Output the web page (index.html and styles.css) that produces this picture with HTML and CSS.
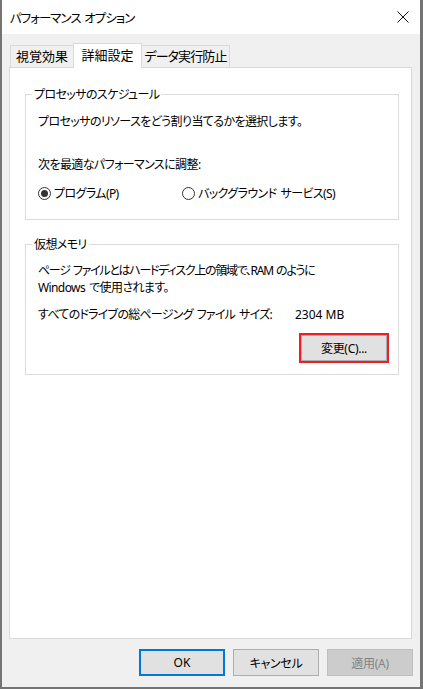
FILE: index.html
```html
<!DOCTYPE html>
<html lang="ja">
<head>
<meta charset="utf-8">
<title>パフォーマンス オプション</title>
<link rel="stylesheet" href="styles.css">
</head>
<body>
<div class="window">
  <div class="titlebar">
    <span class="title">パフォーマンス オプション</span>
    <svg class="close" width="12" height="12" viewBox="0 0 12 12"><path d="M0.5 0.5 L11.5 11.5 M11.5 0.5 L0.5 11.5" stroke="#111" stroke-width="1" fill="none"/></svg>
  </div>
  <div class="content">
    <div class="tabs">
      <div class="tab t1">視覚効果</div>
      <div class="tab t2 active">詳細設定</div>
      <div class="tab t3">データ実行防止</div>
    </div>
    <div class="panel">
      <fieldset class="group g1">
        <legend>プロセッサのスケジュール</legend>
        <p class="line l1">プロセッサのリソースをどう割り当てるかを選択します。</p>
        <p class="line l2">次を最適なパフォーマンスに調整:</p>
        <div class="radios">
          <label class="radio r1">
            <svg width="13" height="13" viewBox="0 0 13 13"><circle cx="6.5" cy="6.5" r="6" fill="#fff" stroke="#333" stroke-width="1"/><circle cx="6.5" cy="6.5" r="3.5" fill="#333"/></svg>
            <span>プログラム(P)</span>
          </label>
          <label class="radio r2">
            <svg width="13" height="13" viewBox="0 0 13 13"><circle cx="6.5" cy="6.5" r="6" fill="#fff" stroke="#333" stroke-width="1"/></svg>
            <span>バックグラウンド サービス(S)</span>
          </label>
        </div>
      </fieldset>
      <fieldset class="group g2">
        <legend>仮想メモリ</legend>
        <p class="line m1"><span class="tight">ページ ファイルとはハードディスク上の領域で、RAM のように</span><br>Windows で使用されます。</p>
        <div class="line m2"><span class="size-label">すべてのドライブの総ページング ファイル サイズ:</span><span class="size-value">2304 MB</span></div>
        <div class="btnrow">
          <span class="highlight"><span class="btn change">変更(C)...</span></span>
        </div>
      </fieldset>
    </div>
    <div class="footer">
      <span class="btn ok">OK</span>
      <span class="btn">キャンセル</span>
      <span class="btn disabled">適用(A)</span>
    </div>
  </div>
</div>
</body>
</html>
```
FILE: styles.css
```css
html, body {
  margin: 0;
  padding: 0;
}
body {
  background: #747474;
  width: 423px;
  height: 689px;
  overflow: hidden;
  font-family: "Segoe UI", "Noto Sans", "Noto Sans CJK JP", sans-serif;
  font-size: 12px;
  letter-spacing: -0.6px;
  word-spacing: 1.5px;
  font-feature-settings: "palt";
  color: #000;
}
.window {
  margin-left: 2px;
  width: 418px;
  height: 687px;
  background: #f0f0f0;
}
.titlebar {
  height: 34px;
  background: #fff;
  display: flex;
  align-items: center;
  justify-content: space-between;
  padding: 0 11px 0 8px;
}
.title {
  line-height: 17px;
  margin-top: 3px;
  font-size: 12.5px;
  letter-spacing: -1px;
}
.close {
  display: block;
  margin-top: -1px;
}
.content {
  padding: 0 8px 0 7px;
}
.tabs {
  display: flex;
  align-items: flex-end;
  padding: 9px 0 0 1px;
  height: 24px;
}
.tab {
  box-sizing: border-box;
  height: 22px;
  border: 1px solid #d9d9d9;
  border-bottom: none;
  background: #f0f0f0;
  text-align: center;
  line-height: 20px;
  white-space: nowrap;
  font-size: 13px;
  letter-spacing: 0;
}
.t1 { width: 63px; border-right: none; }
.t2 { width: 69px; }
.t3 { width: 88px; border-left: none; letter-spacing: -0.9px; }
.tab.active {
  height: 25px;
  margin-bottom: -1px;
  background: #fff;
  position: relative;
  z-index: 1;
  line-height: 22px;
  padding-bottom: 2px;
}
.panel {
  box-sizing: border-box;
  height: 572px;
  background: #fff;
  border: 1px solid #d9d9d9;
  padding-top: 18px;
}
.group {
  margin: 0 12px 0 15px;
  padding: 0 0 17px 12px;
  border: 1px solid #dcdcdc;
  min-inline-size: 0;
}
.group legend {
  margin-left: -6px;
  padding: 0 2px;
  line-height: 17px;
}
.line {
  margin: 0;
  line-height: 17px;
  white-space: nowrap;
}
.l1 { margin-top: 10px; }
.l2 { margin-top: 26px; }
.radios {
  display: flex;
  margin-top: 12px;
  line-height: 17px;
}
.radio {
  display: flex;
  align-items: center;
  gap: 3px;
}
.radio svg { display: block; flex: none; }
.r1 { width: 144px; }
.g2 {
  margin-top: 16px;
  padding-bottom: 11px;
}
.m1 { margin-top: 9px; }
.tight { letter-spacing: -1.3px; }
.m2 {
  margin-top: 10px;
  display: flex;
}
.size-label { width: 257px; flex: none; letter-spacing: -0.75px; }
.size-value { letter-spacing: 0; word-spacing: 0; }
.btnrow {
  display: flex;
  justify-content: flex-end;
  padding-right: 9px;
  margin-top: 10px;
}
.highlight {
  display: block;
  border: 2px solid #e8202a;
}
.btn {
  box-sizing: border-box;
  display: flex;
  align-items: center;
  justify-content: center;
  width: 86px;
  height: 27px;
  background: #e1e1e1;
  border: 1px solid #adadad;
  white-space: nowrap;
  letter-spacing: -0.3px;
}
.btn.change {
  height: 26px;
}
.footer {
  display: flex;
  justify-content: flex-end;
  gap: 8px;
  padding: 10px 0 0 0;
  margin-right: -1px;
}
.btn.ok {
  border: 2px solid #0078d7;
  letter-spacing: 0;
}
.btn.disabled {
  background: #cccccc;
  border-color: #bfbfbf;
  color: #838383;
}
```
